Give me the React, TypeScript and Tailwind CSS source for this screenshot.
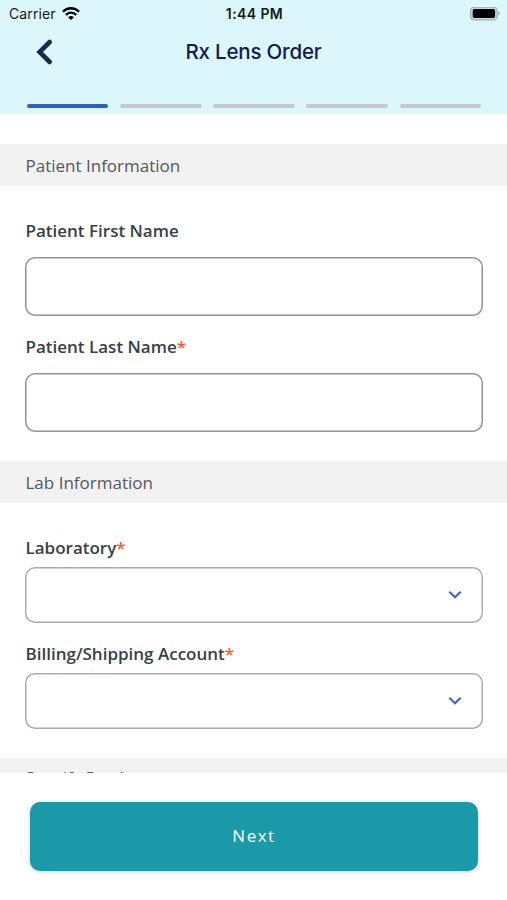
import type { ReactNode } from "react";

const steps = [1, 2, 3, 4, 5];
const currentStep = 1;

const StatusBar = () => (
  <div className="grid h-7 grid-cols-3 items-center pr-[7px] pl-[9px] font-['Inter',sans-serif] text-sm text-[#101c20]">
    <div className="flex items-center gap-[6px]">
      <span className="tracking-[0.1px]">Carrier</span>
      <svg width="18" height="14" viewBox="0 0 18 14" fill="none" stroke="#000" strokeWidth="2.3">
        <path d="M0.9 4.7C5.4 0.1 12.6 0.1 17.1 4.7" />
        <path d="M3.8 7.9C6.8 4.9 11.2 4.9 14.2 7.9" />
        <path d="M9 13L6.1 10.2C7.8 8.7 10.2 8.7 11.9 10.2Z" fill="#000" stroke="none" />
      </svg>
    </div>
    <span className="text-center font-semibold tracking-[0.4px]">1:44 PM</span>
    <svg className="justify-self-end" width="31" height="14" viewBox="0 0 31 14">
      <rect x="1.6" y="0.1" width="26.4" height="12.8" rx="3.6" fill="#c9dada" stroke="#9db1b1" strokeWidth="1.2" />
      <rect x="3.7" y="2.1" width="22.4" height="8.8" rx="1.6" fill="#000" />
      <path d="M29.1 4.3C31.3 5.1 31.3 7.9 29.1 8.7Z" fill="#9db1b1" />
    </svg>
  </div>
);

const SectionTitle = ({ className = "pt-px", children }: { className?: string; children: ReactNode }) => (
  <h2
    className={`flex h-[42px] shrink-0 items-center bg-[#f2f2f2] px-[25.5px] text-[17px] text-[#55565f] ${className}`}
  >
    {children}
  </h2>
);

const Label = ({ htmlFor, required, children }: { htmlFor: string; required?: boolean; children: ReactNode }) => (
  <label htmlFor={htmlFor} className="block pl-[0.5px] text-[17px] leading-6 font-semibold text-[#364147]">
    {children}
    {required && <span className="text-[#fb5a2c]">*</span>}
  </label>
);

const TextField = ({ id, label, required }: { id: string; label: string; required?: boolean }) => (
  <div>
    <Label htmlFor={id} required={required}>
      {label}
    </Label>
    <input
      id={id}
      type="text"
      className="mt-[13.5px] block h-[59px] w-full rounded-[10px] bg-white px-4 shadow-[inset_0_0_0_1.5px_#919191] outline-none"
    />
  </div>
);

const SelectField = ({ id, label }: { id: string; label: string }) => (
  <div>
    <Label htmlFor={id} required>
      {label}
    </Label>
    <button
      id={id}
      type="button"
      className="mt-[7px] flex h-14 w-full items-center justify-end rounded-[10px] bg-white pr-[21px] shadow-[inset_0_0_0_1.5px_#aaaaaa]"
    >
      <svg width="14" height="10" viewBox="0 0 14 10" fill="none" stroke="#3d68b4" strokeWidth="2.1">
        <path d="M1.3 1.7L7 7.3L12.7 1.7" />
      </svg>
    </button>
  </div>
);

export default function App() {
  return (
    <div className="flex h-[900px] w-[507px] flex-col overflow-hidden bg-white font-['Open_Sans',sans-serif]">
      <header className="h-[114px] shrink-0 bg-[#dcf7fb]">
        <StatusBar />
        <div className="grid h-12 grid-cols-[60px_1fr_60px] items-center">
          <button type="button" aria-label="Back" className="ml-[34px]">
            <svg width="19" height="28" viewBox="0 0 19 28" fill="none" stroke="#162b4e" strokeWidth="4.6">
              <path d="M15.7 4L5.6 14L15.7 24" strokeLinecap="round" strokeLinejoin="miter" />
            </svg>
          </button>
          <h1 className="text-center font-['Inter',sans-serif] text-[20.5px] font-medium tracking-[-0.2px] text-[#131a51]">
            Rx Lens Order
          </h1>
        </div>
        <div className="mt-7 flex gap-[11.5px] pr-[25.5px] pl-[26.5px]">
          {steps.map((step) => (
            <div
              key={step}
              className={`h-1 flex-1 rounded-full ${step === currentStep ? "bg-[#2e61b6]" : "bg-[#c6c7cb]"}`}
            />
          ))}
        </div>
      </header>

      <main className="flex h-[659px] shrink-0 flex-col overflow-hidden pt-[30px]">
        <SectionTitle>Patient Information</SectionTitle>
        <div className="flex flex-col gap-[19.5px] pt-[33px] pr-6 pb-[29.5px] pl-[25px]">
          <TextField id="first-name" label="Patient First Name" />
          <TextField id="last-name" label="Patient Last Name" required />
        </div>
        <SectionTitle>Lab Information</SectionTitle>
        <div className="flex flex-col gap-[19px] pt-[33px] pr-6 pb-[29px] pl-[25px]">
          <SelectField id="laboratory" label="Laboratory" />
          <SelectField id="account" label="Billing/Shipping Account" />
        </div>
        <SectionTitle className="pb-0.5">Specify Product</SectionTitle>
      </main>

      <footer className="pt-[29px] pr-[29px] pl-[30px]">
        <button
          type="button"
          className="h-[69px] w-full rounded-[10px] bg-[#1c99a8] pb-0.5 text-[17px] font-medium tracking-[1.5px] text-white shadow-[0_1px_4px_rgba(0,0,0,0.2)]"
        >
          Next
        </button>
      </footer>
    </div>
  );
}
